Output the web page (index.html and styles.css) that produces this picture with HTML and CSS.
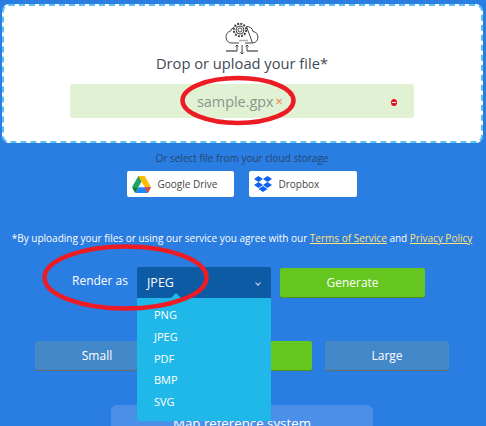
FILE: index.html
```html
<!DOCTYPE html>
<html lang="en">
<head>
  <meta name="viewport" content="width=device-width, initial-scale=1">
  <link rel="stylesheet" href="styles.css">
  <title>Render GPX</title>
</head>
<body>

<div class="page">
  <!-- Upload box -->
  <div class="dropzone">
    <svg class="cloud-icon" width="34" height="33" viewBox="0 0 34 33" fill="none" stroke="#444" stroke-width="1">
      <path d="M7 21a6 6 0 0 1-1.500-11.800a5 5 0 0 1 3.500-3.700M21.500 4.500a6 6 0 0 1 6.500 5a5.800 5.800 0 0 1-.5 11.500zM7 21h7M20 21h7.500"/>
      <circle cx="15" cy="8" r="6.200" fill="#fff" stroke-width="2" stroke-dasharray="2 1.200"/>
      <circle cx="15" cy="8" r="4" fill="#fff"/>
      <circle cx="15" cy="8" r="2"/>
      <path d="M14 18.500h9" stroke="#aaa" stroke-width="1.500"/>
      <path d="M1 29h11M22 29h11" stroke="#666" stroke-width="1.500"/>
      <path d="M12 29v-6M10.500 24.500l1.500-1.500l1.500 1.500M22 29v-6M20.500 24.500l1.500-1.500l1.500 1.500M17 23v9M15.500 30.500l1.500 1.500l1.500-1.500"/>
    </svg>
    <h2 class="drop-title">Drop or upload your file*</h2>
    <div class="file-row">
      <span class="file-name">sample.gpx</span>
      <span class="file-remove">×</span>
      <span class="file-status"></span>
    </div>
  </div>

  <!-- Cloud storage -->
  <p class="cloud-label">Or select file from your cloud storage</p>
  <div class="cloud-buttons">
    <a class="cloud-btn" href="#">
      <svg width="19" height="17" viewBox="0 0 19 17">
        <path d="M6.300 0h6.400l-3.200 5.700l-3.100 0z" fill="#188038"/>
        <path d="M6.300 0l3.200 5.700l-3.200 5.500H0z" fill="#1fa463"/>
        <path d="M12.700 0L19 11.200h-6.300L6.300 0z" fill="#ffba00"/>
        <path d="M6.300 11.200H19l-3.200 5.800H3.200z" fill="#2684fc"/>
        <path d="M0 11.200h6.300L3.200 17z" fill="#00832d"/>
        <path d="M12.700 11.200H19L15.800 17z" fill="#ea4335"/>
      </svg>
      <span>Google Drive</span>
    </a>
    <a class="cloud-btn" href="#">
      <svg width="18" height="16" viewBox="0 0 18 16" fill="#0b62ef">
        <path d="M4.500 0L9 3L4.500 6L0 3zM13.500 0L18 3L13.500 6L9 3zM4.500 6L9 9L4.500 12L0 9zM13.500 6L18 9L13.500 12L9 9zM4.500 13L9 10L13.500 13L9 16z"/>
      </svg>
      <span>Dropbox</span>
    </a>
  </div>

  <p class="terms">*By uploading your files or using our service you agree with our <a href="#">Terms of Service</a> and <a href="#">Privacy Policy</a></p>

  <!-- Render options -->
  <div class="render-row">
    <label class="render-label">Render as</label>
    <div class="select">
      <div class="select-value">JPEG<span class="select-arrow"></span></div>
      <ul class="select-menu">
        <li>PNG</li>
        <li>JPEG</li>
        <li>PDF</li>
        <li>BMP</li>
        <li>SVG</li>
      </ul>
    </div>
    <button class="btn btn-green btn-generate">Generate</button>
  </div>

  <div class="size-row">
    <button class="btn btn-size">Small</button>
    <button class="btn btn-size btn-medium">Medium</button>
    <button class="btn btn-size">Large</button>
  </div>

  <div class="map-ref">Map reference system</div>

  <!-- Red marks drawn over the screenshot -->
  <svg class="marks" width="486" height="426" viewBox="0 0 486 426" fill="none" stroke="#ed1c24" stroke-width="4.500">
    <ellipse cx="238" cy="100.500" rx="55.500" ry="22.500"/>
    <ellipse cx="125.500" cy="277.500" rx="81" ry="31"/>
  </svg>
</div>

</body>
</html>
```

FILE: styles.css
```css
html, body {
  margin: 0;
  padding: 0;
  height: 100%;
  overflow: hidden;
}
body {
  font-family: "Open Sans", "Noto Sans", sans-serif;
  background-color: #2a7de1;
}
.page {
  position: relative;
  height: 426px;
  overflow: hidden;
  padding-top: 4px;
  box-sizing: border-box;
}
.dropzone {
  display: flex;
  flex-direction: column;
  align-items: center;
  height: 139px;
  margin: 0 3px 0 2px;
  padding: 16px 1px 0 0;
  box-sizing: border-box;
  background-color: #fff;
  border: 2px dashed #5cc1f2;
  border-radius: 7px;
}
.cloud-icon {
  display: block;
}
.drop-title {
  margin: -2px 0 0;
  font-size: 14.700px;
  font-weight: 400;
  line-height: 20px;
  color: #3f4a54;
}
.file-row {
  position: relative;
  display: flex;
  justify-content: center;
  align-items: center;
  gap: 2px;
  width: 344px;
  height: 34px;
  margin-top: 11px;
  padding-right: 4px;
  box-sizing: border-box;
  background-color: #e0f2d3;
  border-radius: 3px;
}
.file-name {
  font-size: 14.400px;
  color: #8a958a;
}
.file-remove {
  font-size: 13px;
  color: #f08040;
}
.file-status {
  position: absolute;
  right: 17px;
  top: 15px;
  width: 6px;
  height: 7px;
  border-radius: 50%;
  background-color: #e01020;
}
.file-status::after {
  content: "";
  display: block;
  height: 1px;
  margin: 3px 1px 0;
  background-color: #fff;
}
.cloud-label {
  margin: 8px 0 0;
  padding-right: 2px;
  text-align: center;
  font-size: 10px;
  line-height: 14px;
  color: #26466f;
}
.cloud-buttons {
  display: flex;
  justify-content: center;
  gap: 15px;
  margin-top: 6px;
  padding-right: 3px;
}
.cloud-btn {
  display: flex;
  align-items: center;
  gap: 7px;
  width: 107px;
  height: 26px;
  padding-left: 5px;
  box-sizing: border-box;
  background-color: #fff;
  border-radius: 2px;
  font-size: 10px;
  color: #444;
  text-decoration: none;
}
.cloud-btn + .cloud-btn {
  width: 108px;
}
.terms {
  margin: 34px 0 0;
  padding-right: 2px;
  text-align: center;
  font-size: 10px;
  line-height: 14px;
  white-space: nowrap;
  color: #fff;
}
.terms a {
  color: #ffe27a;
}
.render-row {
  display: flex;
  margin-top: 22px;
  padding-left: 72px;
}
.render-label {
  width: 65px;
  padding-top: 6px;
  font-size: 12px;
  line-height: 16px;
  color: #fff;
}
.select {
  position: relative;
  width: 134px;
}
.select-value {
  display: flex;
  justify-content: space-between;
  align-items: center;
  height: 31px;
  padding: 0 11px 0 10px;
  background-color: #0d5aa5;
  border-radius: 2px 2px 0 0;
  font-size: 12.500px;
  color: #fff;
}
.select-arrow {
  width: 3px;
  height: 3px;
  border-right: 1px solid #dde;
  border-bottom: 1px solid #dde;
  transform: rotate(45deg);
}
.select-menu {
  position: absolute;
  top: 31px;
  left: 0;
  z-index: 2;
  width: 100%;
  margin: 0;
  padding: 6px 0 0 17px;
  height: 123px;
  box-sizing: border-box;
  list-style: none;
  background-color: #20b8e8;
  border-radius: 0 0 3px 3px;
  font-size: 11px;
  line-height: 21.800px;
  color: #fff;
}
.select-menu::before {
  content: "";
  position: absolute;
  top: -5px;
  left: 34px;
  border-left: 5px solid transparent;
  border-right: 5px solid transparent;
  border-bottom: 5px solid #20b8e8;
}
.btn {
  border: none;
  font-family: inherit;
  color: #fff;
  border-radius: 2px;
}
.btn-green {
  background-color: #64c61e;
  box-shadow: 0 1px 0 #4f8f20;
}
.btn-generate {
  width: 145px;
  height: 29px;
  margin: 1px 0 0 9px;
  font-size: 12px;
}
.size-row {
  display: flex;
  gap: 13px;
  margin: 43px 0 0 35px;
}
.btn-size {
  width: 124px;
  height: 29px;
  background-color: #4388c9;
  box-shadow: 0 1px 0 #6a6a6a;
  font-size: 12px;
}
.btn-medium {
  width: 140px;
  background-color: #64c61e;
  box-shadow: 0 1px 0 #4f8f20;
}
.map-ref {
  width: 262px;
  height: 40px;
  margin: 35px 0 0 111px;
  padding-top: 9px;
  box-sizing: border-box;
  text-align: center;
  background-color: #4a90e8;
  border-radius: 6px;
  font-size: 13.300px;
  color: #fff;
}
.marks {
  position: absolute;
  top: 0;
  left: 0;
  z-index: 3;
  pointer-events: none;
}
```
